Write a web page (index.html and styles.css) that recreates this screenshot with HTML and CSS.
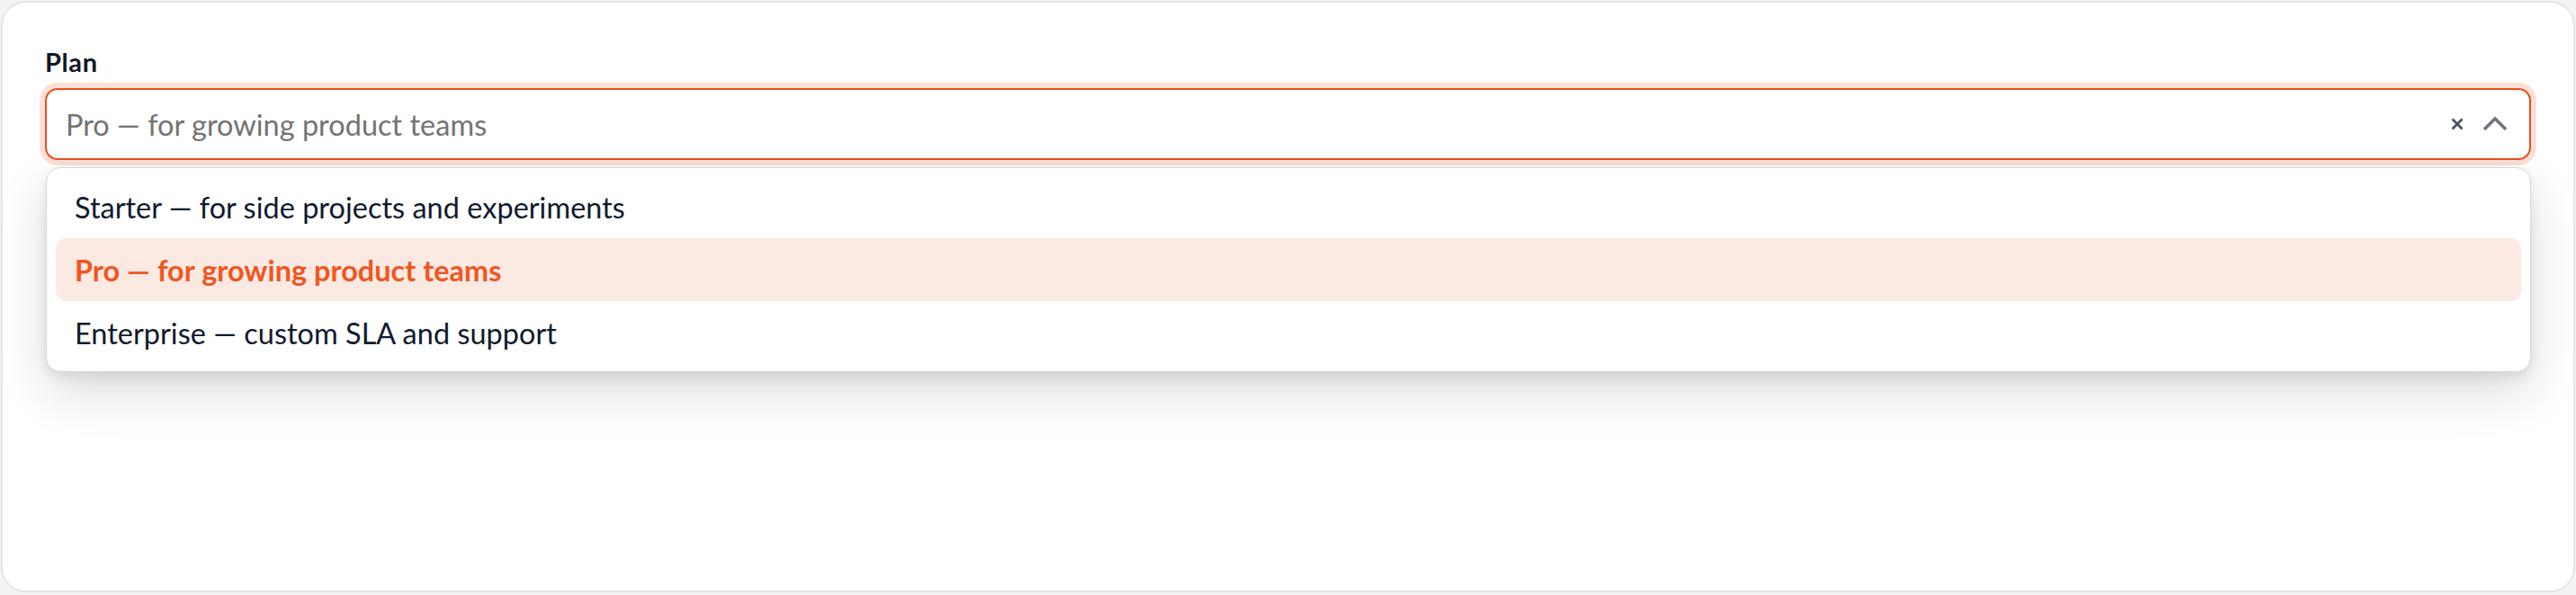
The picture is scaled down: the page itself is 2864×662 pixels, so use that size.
FILE: index.html
```html
<!DOCTYPE html>
<html lang="en">
<head>
<meta charset="utf-8">
<title>Plan select</title>
<link rel="stylesheet" href="styles.css">
</head>
<body>
<div class="card">
  <label class="field-label">Plan</label>
  <div class="select">
    <div class="control">
      <span class="value">Pro — for growing product teams</span>
      <span class="actions">
        <svg class="clear" width="14" height="14" viewBox="0 0 14 14"><path d="M1.5 1.5 L12.5 12.5 M12.5 1.5 L1.5 12.5" stroke="#4b5262" stroke-width="2.8" stroke-linecap="butt" fill="none"/></svg>
        <svg class="chevron" width="28" height="18" viewBox="0 0 28 18"><path d="M2 15 L14 3 L26 15" stroke="#6f7480" stroke-width="3.6" stroke-linejoin="miter" fill="none"/></svg>
      </span>
    </div>
    <ul class="menu">
      <li class="option">Starter — for side projects and experiments</li>
      <li class="option selected">Pro — for growing product teams</li>
      <li class="option">Enterprise — custom SLA and support</li>
    </ul>
  </div>
</div>
</body>
</html>
```
FILE: styles.css
```css
html, body {
  margin: 0;
  padding: 0;
}
body {
  background: #f3f3f6;
  padding: 1px;
  font-family: "Lato", "Noto Sans", sans-serif;
}
.card {
  box-sizing: border-box;
  width: 2862px;
  height: 658px;
  background: #ffffff;
  border: 2px solid #e4e4ea;
  border-radius: 28px;
  padding: 47px 47px 0 47px;
}
.field-label {
  display: block;
  font-size: 29px;
  letter-spacing: 0.6px;
  line-height: 38px;
  font-weight: 700;
  color: #111827;
  margin-bottom: 10px;
}
.select {
  position: relative;
}
.control {
  box-sizing: border-box;
  height: 80px;
  border: 2px solid #e8501d;
  border-radius: 14px;
  box-shadow: 0 0 0 6px #fbe0d6;
  background: #fff;
  display: flex;
  align-items: center;
  padding: 0 24px 0 21px;
}
.value {
  flex: 1;
  font-size: 32.5px;
  color: #737373;
}
.actions {
  display: flex;
  align-items: center;
  gap: 21px;
}
.clear {
  display: block;
}
.chevron {
  display: block;
}
.menu {
  position: absolute;
  left: 1px;
  right: 0;
  top: calc(100% + 8px);
  margin: 0;
  list-style: none;
  box-sizing: border-box;
  height: 228px;
  background: #fff;
  border: 1px solid #d6d6da;
  border-radius: 16px;
  padding: 8px 10px;
  box-shadow: 0 6px 14px rgba(0,0,0,0.08), 0 22px 55px rgba(0,0,0,0.14);
}
.option {
  height: 70px;
  display: flex;
  align-items: center;
  padding: 0 21px;
  border-radius: 12px;
  font-size: 32.5px;
  color: #111a2e;
}
.option.selected {
  background: #fce9e2;
  color: #f0561e;
  font-weight: 700;
}
```
